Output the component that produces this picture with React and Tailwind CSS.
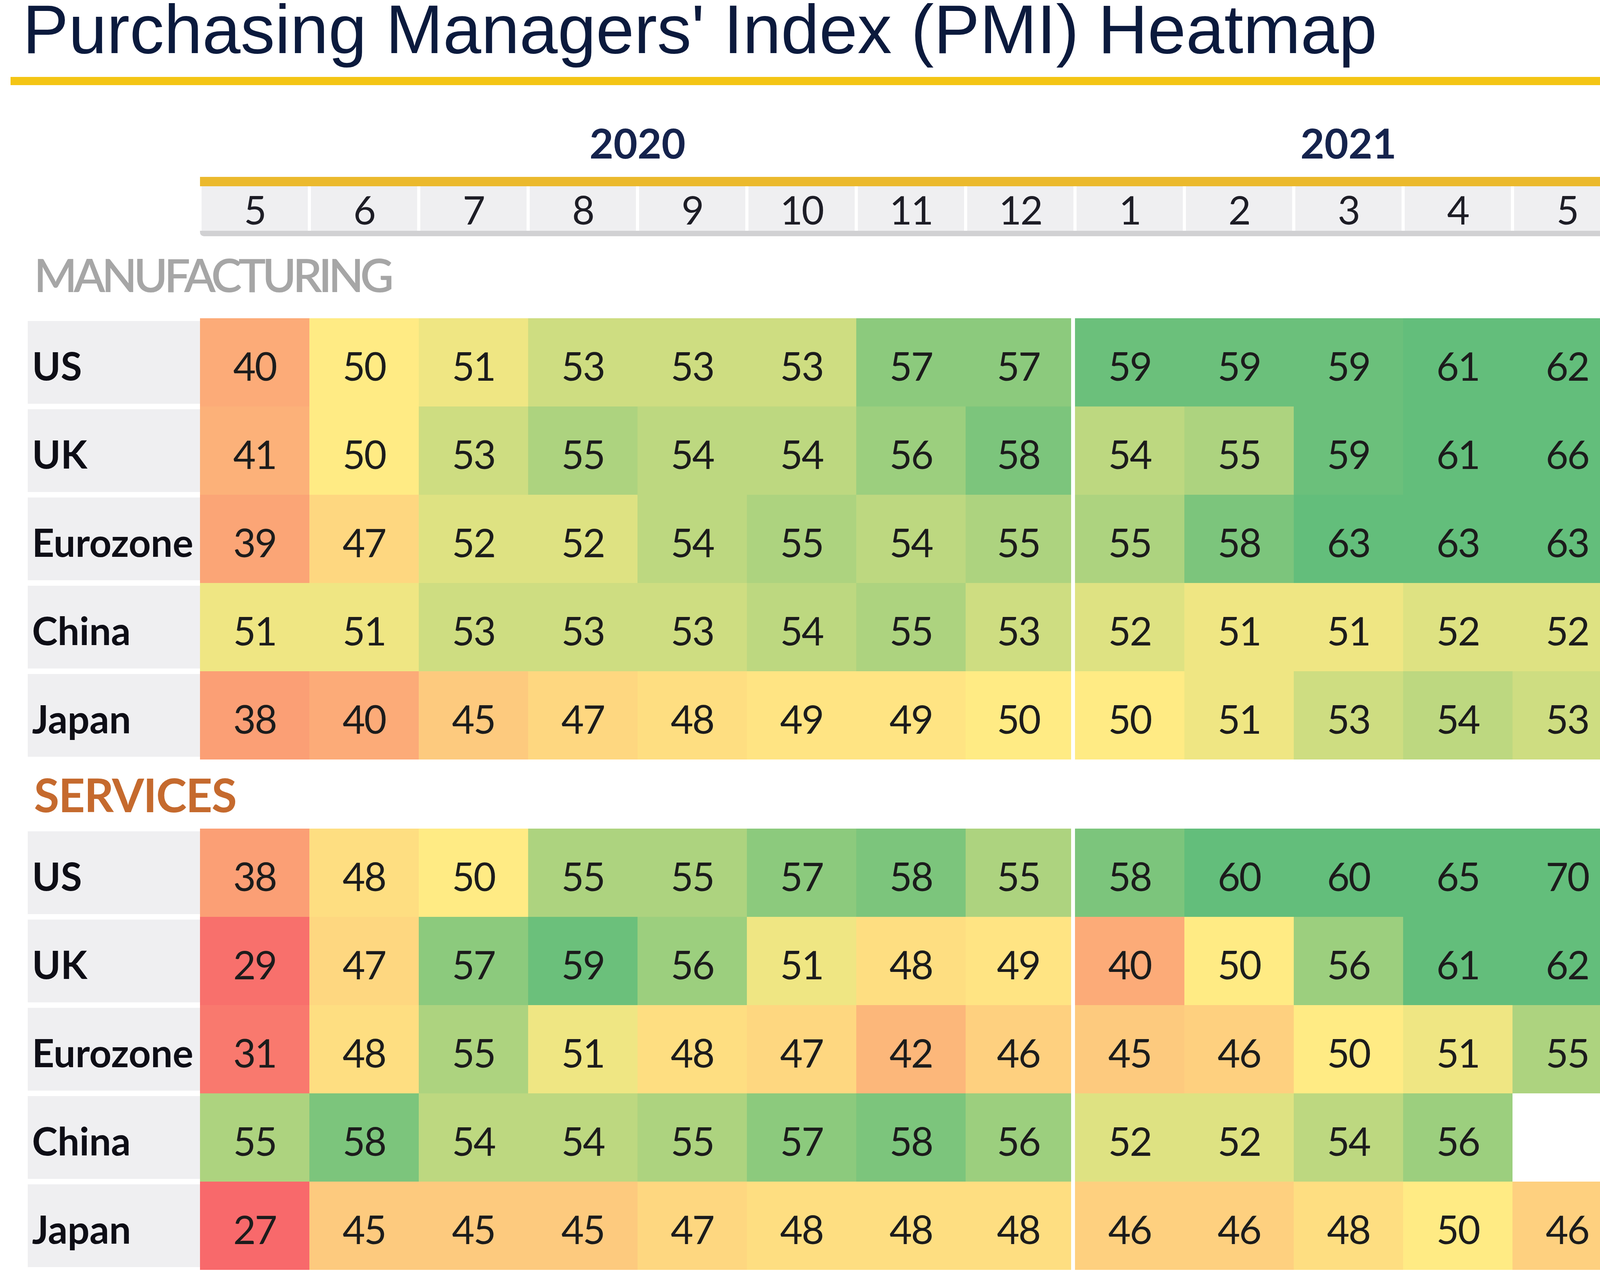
import React from 'react';
import clsx from 'clsx';

const MONTHS = [5, 6, 7, 8, 9, 10, 11, 12, 1, 2, 3, 4, 5];

const MANUFACTURING = [
  ['US', [40, 50, 51, 53, 53, 53, 57, 57, 59, 59, 59, 61, 62]],
  ['UK', [41, 50, 53, 55, 54, 54, 56, 58, 54, 55, 59, 61, 66]],
  ['Eurozone', [39, 47, 52, 52, 54, 55, 54, 55, 55, 58, 63, 63, 63]],
  ['China', [51, 51, 53, 53, 53, 54, 55, 53, 52, 51, 51, 52, 52]],
  ['Japan', [38, 40, 45, 47, 48, 49, 49, 50, 50, 51, 53, 54, 53]],
];

const SERVICES = [
  ['US', [38, 48, 50, 55, 55, 57, 58, 55, 58, 60, 60, 65, 70]],
  ['UK', [29, 47, 57, 59, 56, 51, 48, 49, 40, 50, 56, 61, 62]],
  ['Eurozone', [31, 48, 55, 51, 48, 47, 42, 46, 45, 46, 50, 51, 55]],
  ['China', [55, 58, 54, 54, 55, 57, 58, 56, 52, 52, 54, 56, null]],
  ['Japan', [27, 45, 45, 45, 47, 48, 48, 48, 46, 46, 48, 50, 46]],
];

// excel-style 3 colour scale: red (min) -> yellow (50) -> green (~60)
const RED = [248, 105, 107];
const YELLOW = [255, 235, 132];
const GREEN = [99, 190, 123];

function heat(v) {
  if (v == null) return '#ffffff';
  let a, b, t;
  if (v <= 50) {
    t = Math.pow(Math.max(0, (v - 27) / 23), 1.2);
    a = RED;
    b = YELLOW;
  } else {
    t = Math.min(1, (v - 50) / 9.5);
    a = YELLOW;
    b = GREEN;
  }
  const c = a.map((x, i) => Math.round(x + (b[i] - x) * t));
  return `rgb(${c[0]}, ${c[1]}, ${c[2]})`;
}

function Row({ label, values }) {
  return (
    <div className="flex h-[226px]">
      <div className="ml-[71px] w-[441px] py-[7px]">
        <div className="h-full bg-[#efeff1] flex items-center pl-[11px] pt-[16px] text-[99px] font-bold text-[#0e0e16]">
          {label}
        </div>
      </div>
      {values.map((v, i) => (
        <div
          key={i}
          className={clsx(
            'w-[280px] flex items-center justify-center pt-[16px] text-[100px] tracking-[-3px] text-[#1c1c1c]',
            i === 7 && 'border-r-[10px] border-white'
          )}
          style={{ backgroundColor: heat(v) }}
        >
          {v ?? ''}
        </div>
      ))}
    </div>
  );
}

export default function App() {
  return (
    <div className="w-[4224px] h-[3278px] bg-white overflow-hidden font-['Lato',sans-serif]">
      {/* title */}
      <h1 className="pl-[58px] h-[150px] leading-[150px] text-[176px] text-[#0b1a3d] font-['Liberation_Sans',Arial,sans-serif] whitespace-nowrap">
        Purchasing Managers' Index (PMI) Heatmap
      </h1>
      <div className="ml-[27px] mt-[47px] w-[4170px] h-[21px] bg-[#f4c514]" />

      {/* years */}
      <div className="flex mt-[94px] h-[106px] leading-[106px] text-[106px] font-bold text-[#15234d]">
        <div className="w-[512px]" />
        <div className="w-[2240px] text-center">2020</div>
        <div className="w-[1400px] text-center">2021</div>
      </div>
      <div className="ml-[512px] mt-[35px] w-[3640px] h-[24px] bg-[#ebb92d]" />

      {/* months */}
      <div className="ml-[512px] flex h-[114px]">
        {MONTHS.map((m, i) => (
          <div
            key={i}
            className="w-[280px] border-x-[4px] border-white bg-[#efeff1] flex items-center justify-center pt-[4px] text-[100px] tracking-[-3px] text-[#1d1d26]"
          >
            {m}
          </div>
        ))}
      </div>
      <div className="ml-[512px] w-[3640px] h-[14px] bg-[#d1d1d3] rounded-bl-[10px]" />

      {/* manufacturing */}
      <div className="pl-[87px] mt-[38px] h-[120px] leading-[120px] text-[118px] font-semibold tracking-[-9px] text-[#a6a6a6]">
        MANUFACTURING
      </div>
      <div className="mt-[52px]">
        {MANUFACTURING.map(([label, values]) => (
          <Row key={label} label={label} values={values} />
        ))}
      </div>

      {/* services */}
      <div className="pl-[87px] mt-[30px] h-[120px] leading-[120px] text-[118px] font-bold tracking-[-2px] text-[#c56a2e]">
        SERVICES
      </div>
      <div className="mt-[27px]">
        {SERVICES.map(([label, values]) => (
          <Row key={label} label={label} values={values} />
        ))}
      </div>
    </div>
  );
}
